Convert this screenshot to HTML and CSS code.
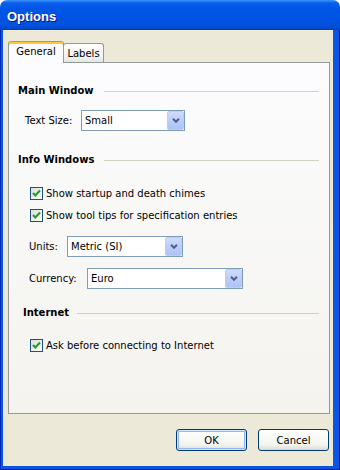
FILE: index.html
```html
<!DOCTYPE html>
<html lang="en">
<head>
    <meta charset="UTF-8">
    <meta name="viewport" content="width=device-width, initial-scale=1.0">
    <title>Options</title>
    <link rel="stylesheet" href="styles.css">
</head>
<body>

    <!-- Options dialog -->
    <div class="window">
        <div class="title-bar">Options</div>
        <div class="frame">
            <div class="client">
                <div class="tabs">
                    <div class="tab tab-active">General</div>
                    <div class="tab tab-labels">Labels</div>
                </div>
                <div class="panel">

                    <div class="group-head head-main">
                        <span>Main Window</span><span class="rule"></span>
                    </div>
                    <div class="field field-size">
                        <label class="label-size">Text Size:</label>
                        <div class="combo combo-size">
                            <span class="combo-text">Small</span>
                            <span class="drop"><svg width="8" height="5" viewBox="0 0 8 5"><polyline points="1,0.8 4,3.8 7,0.8" fill="none" stroke="#4d6185" stroke-width="2"/></svg></span>
                        </div>
                    </div>

                    <div class="group-head head-info">
                        <span>Info Windows</span><span class="rule"></span>
                    </div>
                    <div class="check check-first">
                        <span class="box"><svg width="11" height="11" viewBox="0 0 11 11"><path d="M2 5 L4.3 7.4 L9 2.6" fill="none" stroke="#21a121" stroke-width="2.2"/></svg></span>
                        <span>Show startup and death chimes</span>
                    </div>
                    <div class="check check-next">
                        <span class="box"><svg width="11" height="11" viewBox="0 0 11 11"><path d="M2 5 L4.3 7.4 L9 2.6" fill="none" stroke="#21a121" stroke-width="2.2"/></svg></span>
                        <span>Show tool tips for specification entries</span>
                    </div>
                    <div class="field field-units">
                        <label class="label-units">Units:</label>
                        <div class="combo combo-units">
                            <span class="combo-text">Metric (SI)</span>
                            <span class="drop"><svg width="8" height="5" viewBox="0 0 8 5"><polyline points="1,0.8 4,3.8 7,0.8" fill="none" stroke="#4d6185" stroke-width="2"/></svg></span>
                        </div>
                    </div>
                    <div class="field field-currency">
                        <label class="label-currency">Currency:</label>
                        <div class="combo combo-currency">
                            <span class="combo-text">Euro</span>
                            <span class="drop"><svg width="8" height="5" viewBox="0 0 8 5"><polyline points="1,0.8 4,3.8 7,0.8" fill="none" stroke="#4d6185" stroke-width="2"/></svg></span>
                        </div>
                    </div>

                    <div class="group-head head-net">
                        <span>Internet</span><span class="rule"></span>
                    </div>
                    <div class="check check-net">
                        <span class="box"><svg width="11" height="11" viewBox="0 0 11 11"><path d="M2 5 L4.3 7.4 L9 2.6" fill="none" stroke="#21a121" stroke-width="2.2"/></svg></span>
                        <span>Ask before connecting to Internet</span>
                    </div>

                </div>
                <div class="buttons">
                    <button class="btn btn-default">OK</button>
                    <button class="btn">Cancel</button>
                </div>
            </div>
        </div>
    </div>

</body>
</html>
```

FILE: styles.css
```css
body {
    margin: 0;
    background: #ffffff;
    font-family: "DejaVu Sans", Tahoma, sans-serif;
    font-size: 10px;
    color: #000;
}
.window {
    width: 340px;
    height: 470px;
    display: flex;
    flex-direction: column;
}
.title-bar {
    height: 30px;
    box-sizing: border-box;
    padding: 4px 0 0 7px;
    line-height: 26px;
    font-family: "Liberation Sans", Arial, sans-serif;
    font-size: 13px;
    font-weight: bold;
    color: #fff;
    text-shadow: 1px 1px #0a1883;
    border-radius: 7px 7px 0 0;
    background: linear-gradient(to bottom, #3d95ff 0%, #0a5fec 10%, #0055e5 30%, #0053e2 70%, #0150d9 88%, #003fc0 100%);
}
.frame {
    flex: 1;
    display: flex;
    padding: 0 7px 4px 3px;
    background: #0a56e2;
    box-shadow: inset 1px 0 #0029b8, inset -1px 0 #001c9a, inset 0 -1px #001c9a;
}
.client {
    flex: 1;
    display: flex;
    flex-direction: column;
    padding-top: 11px;
    background: #ece9d8;
}

/* tabs */
.tabs {
    position: relative;
    display: flex;
    align-items: flex-end;
    margin-left: 5px;
}
.tab {
    box-sizing: border-box;
    border: 1px solid #919b9c;
    border-bottom: none;
    border-radius: 3px 3px 0 0;
    text-align: center;
}
.tab-active {
    width: 56px;
    height: 22px;
    margin-bottom: -1px;
    line-height: 19px;
    background: #fcfcfe;
    border-top-color: #e68b2c;
    box-shadow: inset 0 2px #ffc73c;
}
.tab-labels {
    width: 41px;
    height: 19px;
    margin-left: -1px;
    padding-top: 1px;
    line-height: 17px;
    background: linear-gradient(to bottom, #ffffff, #f3f3ef 70%, #e6e5de);
}

/* tab page */
.panel {
    box-sizing: border-box;
    width: 322px;
    height: 352px;
    margin-left: 5px;
    padding: 0 10px 0 9px;
    border: 1px solid #919b9c;
    background: linear-gradient(to bottom, #fcfcfe, #f4f3ee);
}
.group-head {
    display: flex;
    align-items: center;
    height: 12px;
    line-height: 12px;
    font-weight: bold;
}
.rule {
    flex: 1;
    height: 1px;
    margin-left: 10px;
    background: #d0d0bf;
}
.head-main { margin-top: 22px; }
.head-info { margin-top: 23px; }
.head-net { margin-top: 18px; padding-left: 5px; }
.head-net .rule { margin-left: 8px; }

.field {
    display: flex;
    align-items: center;
    height: 21px;
}
.field label {
    line-height: 21px;
}
.field-size { margin-top: 13px; padding-left: 7px; }
.field-units { margin-top: 14px; padding-left: 11px; }
.field-currency { margin-top: 11px; padding-left: 11px; }
.label-size { width: 56px; }
.label-units { width: 38px; }
.label-currency { width: 58px; }

.combo {
    box-sizing: border-box;
    display: flex;
    height: 21px;
    border: 1px solid #7f9db9;
    background: #fff;
}
.combo-size { width: 104px; }
.combo-units { width: 116px; }
.combo-currency { width: 156px; }
.combo-text {
    flex: 1;
    padding-left: 3px;
    line-height: 19px;
}
.drop {
    box-sizing: border-box;
    display: flex;
    align-items: center;
    justify-content: center;
    width: 17px;
    border: 1px solid #bccdf5;
    border-radius: 2px;
    background: linear-gradient(to bottom, #cddbfd, #b9ccf8 60%, #aec3f4);
}

.check {
    display: flex;
    align-items: center;
    height: 13px;
    padding-left: 12px;
    line-height: 13px;
}
.check-first { margin-top: 21px; }
.check-next { margin-top: 9px; }
.check-net { margin-top: 20px; }
.box {
    box-sizing: border-box;
    display: flex;
    width: 13px;
    height: 13px;
    margin-right: 3px;
    border: 1px solid #1c5180;
    background: linear-gradient(135deg, #dcdcd7, #ffffff);
}

/* dialog buttons */
.buttons {
    display: flex;
    justify-content: flex-end;
    gap: 11px;
    margin-top: 15px;
    margin-right: 4px;
}
.btn {
    width: 71px;
    height: 22px;
    padding: 0;
    font-family: "DejaVu Sans", Tahoma, sans-serif;
    font-size: 10px;
    color: #000;
    border: 1px solid #003c74;
    border-radius: 3px;
    background: linear-gradient(to bottom, #ffffff, #f3f3ef 75%, #dcd8ce);
}
.btn-default {
    box-shadow: inset 0 0 0 1px #cee7ff, inset 0 0 0 2px #98b4ec;
}
```
